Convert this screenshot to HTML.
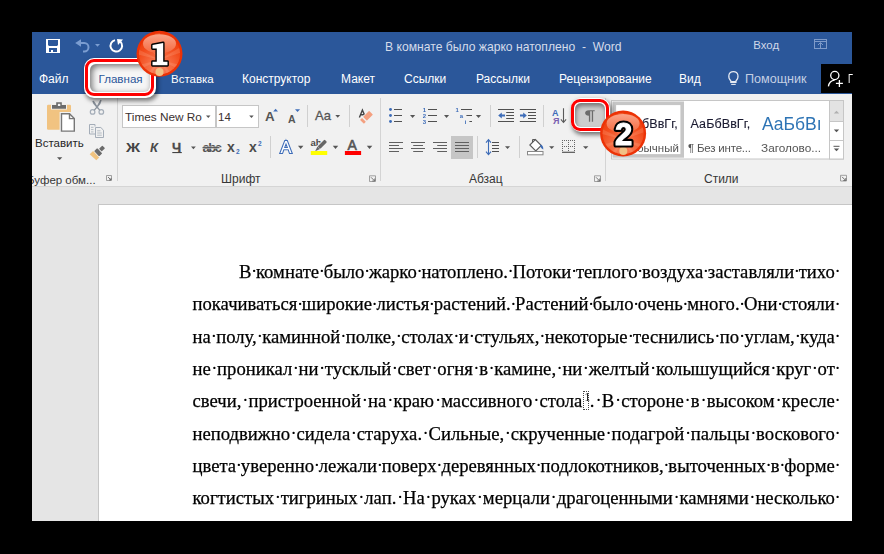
<!DOCTYPE html>
<html><head><meta charset="utf-8">
<style>
*{box-sizing:border-box}
html,body{margin:0;padding:0;width:884px;height:554px;overflow:hidden;background:#000;font-family:"Liberation Sans",sans-serif}
.a{position:absolute}
#win{position:absolute;left:32px;top:32px;width:820px;height:489px;background:#e5e5e5;overflow:hidden}
#title{position:absolute;left:0;top:0;width:820px;height:62px;background:#2b579a}
#ribbon{position:absolute;left:0;top:62px;width:820px;height:93px;background:#f1f1f1;border-bottom:1px solid #d5d5d5;overflow:hidden}
.t{position:absolute;white-space:nowrap;font-size:12px;line-height:14px}
.tab{color:#fff;top:40px}
.sep{position:absolute;width:1px;background:#d4d4d4}
.gl{position:absolute;font-size:12px;line-height:14px;color:#363636;top:78px;white-space:nowrap}
#page{position:absolute;left:66px;top:172px;width:800px;height:400px;background:#fff;border-left:1px solid #c6c6c6;border-top:1px solid #c6c6c6}
.ln{position:absolute;right:49.2px;display:flex;font-family:"Liberation Serif",serif;font-size:18.67px;line-height:24px;height:24px;white-space:nowrap;color:#000;-webkit-text-stroke:0.25px #000}
.ln span{flex:none;position:relative}
.ln i{flex:1 1 4.67px;position:relative;font-style:normal;text-align:center}
.ln i::after,.ln b::after{content:"·";position:absolute;left:50%;width:8px;margin-left:-3.6px;top:-0.8px;text-align:center;-webkit-text-stroke:0.1px #000}
.ln b{position:absolute;right:-4.67px;width:4.67px;height:24px;font-weight:normal}
.ln .fn{display:inline-block;position:relative;width:7.5px;height:10px;-webkit-text-stroke:0}
.fn::before{content:"";position:absolute;left:0.5px;top:-6px;width:6px;height:19px;border:1px dotted #444;box-sizing:border-box}
.fn::after{content:"1";position:absolute;left:1.8px;top:-7px;font-size:12.5px;line-height:14px;color:#222;-webkit-text-stroke:0}
</style></head><body>
<div id="win">
  <div id="title">
    <div class="t" style="left:353px;top:8px;color:#d5dcea;font-size:12.15px">В комнате было жарко натоплено&nbsp; -&nbsp; Word</div>
    <div class="t" style="left:721.3px;top:5.5px;color:#cfd8e8;font-size:11.4px">Вход</div>
    <div class="tab t" style="left:7px">Файл</div>
        <div class="tab t" style="left:139px;font-size:11.5px">Вставка</div>
    <div class="tab t" style="left:210px">Конструктор</div>
    <div class="tab t" style="left:309px">Макет</div>
    <div class="tab t" style="left:372px">Ссылки</div>
    <div class="tab t" style="left:444px">Рассылки</div>
    <div class="tab t" style="left:527px">Рецензирование</div>
    <div class="tab t" style="left:647px">Вид</div>
    <div class="tab t" style="left:713px;color:#c4cfe3;font-size:12.6px;top:40px">Помощник</div>
    <div class="a" style="left:789px;top:32px;width:31px;height:29px;background:#000"></div>
  </div>
  <div id="ribbon">

    <div class="t" style="left:3px;top:42px;font-size:11.5px;color:#262626">Вставить</div>
    <div class="a" style="left:90px;top:11px;width:94px;height:23px;background:#fff;border:1px solid #c6c6c6"></div>
    <div class="a" style="left:184px;top:11px;width:43px;height:23px;background:#fff;border:1px solid #c6c6c6"></div>
    <div class="t" style="left:93px;top:16px;font-size:11.8px;color:#3a3030">Times New Ro</div>
    <div class="t" style="left:186px;top:16px;font-size:11.5px;color:#3a3030">14</div>
    <div class="t" style="left:94px;top:47px;font-size:13px;font-weight:bold;color:#444;transform:scaleX(1.2);transform-origin:0 0">Ж</div>
    <div class="t" style="left:118px;top:47px;font-size:13px;font-weight:bold;font-style:italic;color:#4a4a4a">К</div>
    <div class="t" style="left:140px;top:47px;font-size:13px;font-weight:bold;color:#4a4a4a;-webkit-text-stroke:0.3px #4a4a4a">Ч</div>
    <div class="t" style="left:170.5px;top:46.5px;font-size:13px;font-weight:bold;color:#555;letter-spacing:-1.5px">abc</div>
    <div class="t" style="left:195px;top:46px;font-size:14px;font-weight:bold;color:#4a4a4a">x</div>
    <div class="t" style="left:204px;top:50.5px;font-size:6.5px;font-weight:bold;color:#3d6cb8">2</div>
    <div class="t" style="left:217px;top:46px;font-size:14px;font-weight:bold;color:#4a4a4a">x</div>
    <div class="t" style="left:226px;top:42.5px;font-size:6.5px;font-weight:bold;color:#3d6cb8">2</div>
    <div class="t" style="left:233px;top:15.5px;font-size:13.4px;font-weight:bold;color:#555">A</div>
    <div class="t" style="left:256px;top:17.5px;font-size:10.5px;font-weight:bold;color:#555">A</div>
    <div class="t" style="left:283px;top:14.5px;font-size:13px;color:#555;-webkit-text-stroke:0.3px #555">Aa</div>
        
    <div class="t" style="left:278.5px;top:41.5px;font-size:9.5px;font-weight:bold;color:#4a4a4a">ab</div>
    <div class="t" style="left:315.5px;top:43.5px;font-size:14px;color:#555;-webkit-text-stroke:0.6px #555">A</div>
    <div class="t" style="left:520px;top:12px;font-size:9px;font-weight:bold;color:#3d6cb8">A</div>
    <div class="t" style="left:521px;top:20px;font-size:9px;font-weight:bold;color:#7b5fb0">Я</div>
    <div class="gl" style="left:-5px;font-size:11.5px;top:78.5px">Буфер обм...</div>
    <div class="gl" style="left:189px">Шрифт</div>
    <div class="gl" style="left:437px">Абзац</div>
    <div class="gl" style="left:672px">Стили</div>
    <div class="sep" style="left:85px;top:4px;height:83px"></div>
    <div class="sep" style="left:348px;top:4px;height:83px"></div>
    <div class="sep" style="left:573px;top:4px;height:83px"></div>
  </div>
  <div id="page"></div>
</div>
<div id="doc" class="a" style="left:0;top:259.7px;width:884px;height:300px;will-change:transform">
<div class="ln" style="left:239px;top:0.00px"><span>В</span><i></i><span>комнате</span><i></i><span>было</span><i></i><span>жарко</span><i></i><span>натоплено.</span><i></i><span>Потоки</span><i></i><span>теплого</span><i></i><span>воздуха</span><i></i><span>заставляли</span><i></i><span>тихо</span><b></b></div>
<div class="ln" style="left:192.5px;top:32.30px"><span>покачиваться</span><i></i><span>широкие</span><i></i><span>листья</span><i></i><span>растений.</span><i></i><span>Растений</span><i></i><span>было</span><i></i><span>очень</span><i></i><span>много.</span><i></i><span>Они</span><i></i><span>стояли</span><b></b></div>
<div class="ln" style="left:192.5px;top:64.60px"><span>на</span><i></i><span>полу,</span><i></i><span>каминной</span><i></i><span>полке,</span><i></i><span>столах</span><i></i><span>и</span><i></i><span>стульях,</span><i></i><span>некоторые</span><i></i><span>теснились</span><i></i><span>по</span><i></i><span>углам,</span><i></i><span>куда</span><b></b></div>
<div class="ln" style="left:192.5px;top:96.90px"><span>не</span><i></i><span>проникал</span><i></i><span>ни</span><i></i><span>тусклый</span><i></i><span>свет</span><i></i><span>огня</span><i></i><span>в</span><i></i><span>камине,</span><i></i><span>ни</span><i></i><span>желтый</span><i></i><span>колышущийся</span><i></i><span>круг</span><i></i><span>от</span><b></b></div>
<div class="ln" style="left:192.5px;top:129.20px"><span>свечи,</span><i></i><span>пристроенной</span><i></i><span>на</span><i></i><span>краю</span><i></i><span>массивного</span><i></i><span>стола<span class="fn"></span>.</span><i></i><span>В</span><i></i><span>стороне</span><i></i><span>в</span><i></i><span>высоком</span><i></i><span>кресле</span><b></b></div>
<div class="ln" style="left:192.5px;top:161.50px"><span>неподвижно</span><i></i><span>сидела</span><i></i><span>старуха.</span><i></i><span>Сильные,</span><i></i><span>скрученные</span><i></i><span>подагрой</span><i></i><span>пальцы</span><i></i><span>воскового</span><b></b></div>
<div class="ln" style="left:192.5px;top:193.80px"><span>цвета</span><i></i><span>уверенно</span><i></i><span>лежали</span><i></i><span>поверх</span><i></i><span>деревянных</span><i></i><span>подлокотников,</span><i></i><span>выточенных</span><i></i><span>в</span><i></i><span>форме</span><b></b></div>
<div class="ln" style="left:192.5px;top:226.10px"><span>когтистых</span><i></i><span>тигриных</span><i></i><span>лап.</span><i></i><span>На</span><i></i><span>руках</span><i></i><span>мерцали</span><i></i><span>драгоценными</span><i></i><span>камнями</span><i></i><span>несколько</span><b></b></div>
</div>


<svg class="a" style="left:0;top:0" width="884" height="554" viewBox="0 0 884 554">

  <!-- clipboard -->
  <rect x="47" y="104.8" width="24" height="25" rx="1.2" fill="#f1c381"/>
  <path d="M51,104.2 H55.6 V101.5 H62.4 V104.2 H67 V109.6 H51Z" fill="#f1f1f1"/>
  <path d="M52,105 H56.2 V102.2 H61.8 V105 H66 V108.7 H52Z" fill="#6b6b6b"/>
  <rect x="57.9" y="103.8" width="2.4" height="2.2" fill="#f1f1f1"/>
  <rect x="59.6" y="112" width="16.4" height="21" fill="#f1f1f1"/>
  <path d="M61.5,113.8 H69.5 L74.3,118.6 V131.1 H61.5Z" fill="#fff" stroke="#777" stroke-width="1.4"/>
  <path d="M69.5,113.8 V118.6 H74.3" fill="none" stroke="#777" stroke-width="1.4"/>
  <path d="M57,157.2 H62.3 L59.65,159.9Z" fill="#555"/>
  <!-- scissors -->
  <circle cx="92.6" cy="111.9" r="2.3" fill="none" stroke="#a4adb8" stroke-width="1.2"/>
  <circle cx="101.3" cy="111.9" r="2.3" fill="none" stroke="#a4adb8" stroke-width="1.2"/>
  <path d="M92.3,101.6 Q92.8,100.4 94,101 L97.6,106.4 L100.3,110 L99.3,110.5 L96.2,107.2 Q93,104.5 92.3,101.6Z" fill="#8a929c"/>
  <path d="M101.6,100.2 Q101.2,99.4 100.2,100 L96.6,106.4 L93.7,110 L94.7,110.5 L97.8,107.2 Q101,104.5 101.6,100.2Z" fill="#8a929c"/>
  <!-- copy -->
  <path d="M95,126.5 V124.5 H89.5 V134 H95" fill="none" stroke="#a4adb8" stroke-width="1"/>
  <path d="M91,127.3 H93.5 M91,129.6 H93.5 M91,131.9 H93.5" stroke="#a4adb8" stroke-width="0.8"/>
  <path d="M95.5,127.5 H100.8 L103.5,130.2 V137.5 H95.5Z" fill="#f1f1f1" stroke="#a4adb8" stroke-width="1"/>
  <path d="M97.2,130.8 H100.5 M97.2,133 H101.8 M97.2,135.2 H101.8" stroke="#a4adb8" stroke-width="0.8"/>
  <!-- format painter -->
  <g transform="translate(94.4,155.9) rotate(-44)">
    <path d="M-2.3,-4.4 H2.4 V4.4 H-1.6 Z" fill="#f1c37f"/>
    <rect x="3.1" y="-3.6" width="4.3" height="7.2" rx="0.6" fill="#6b6b6b"/>
    <rect x="8.3" y="-1.9" width="4.6" height="3.8" rx="0.6" fill="#6b6b6b"/>
  </g>
  <!-- launcher clipboard -->
  <path d="M106.5,175.5 H111.5 V180.5 H106.5Z" fill="none" stroke="#8c8c8c" stroke-width="0.8"/>
  <path d="M108,177 L111,180 M111,178 V180 H109" fill="none" stroke="#666" stroke-width="0.9"/>
  <!-- font dropdown arrows -->
  <path d="M206,115.5 H210.5 L208.25,117.9Z" fill="#555"/>
  <path d="M249.2,115.5 H253.7 L251.45,117.9Z" fill="#555"/>
  <path d="M191,146.4 H195.8 L193.4,149.2Z" fill="#555"/>
  <path d="M298,145.8 H303.4 L300.7,148.9Z" fill="#555"/>
  <path d="M332.8,145.8 H338.2 L335.5,148.9Z" fill="#555"/>
  <path d="M366.8,145.8 H372.3 L369.55,148.9Z" fill="#555"/>
  <path d="M335.3,115 H340.1 L337.7,117.8Z" fill="#555"/>
  <!-- underline & strike -->
  <rect x="172.3" y="152" width="9.5" height="1.1" fill="#444"/>
  <rect x="202.5" y="146.4" width="17" height="2.6" fill="#f1f1f1" opacity=".6"/>
  <rect x="202.5" y="147.1" width="17" height="1.2" fill="#505050"/>
  <!-- grow/shrink triangles -->
  <path d="M273.2,111.6 L275.6,108.8 L278,111.6Z" fill="#3d6cb8"/>
  <path d="M295,109.2 H300.1 L297.55,111.9Z" fill="#3d6cb8"/>
  <!-- separators font -->
  <rect x="307" y="105" width="1" height="22" fill="#d0d0d0"/>
  <rect x="349" y="105" width="1" height="22" fill="#d0d0d0"/>
  <rect x="270" y="136" width="1" height="22" fill="#d0d0d0"/>
  <text x="286" y="152.6" text-anchor="middle" font-family="Liberation Sans" font-size="16.5" fill="#fff" stroke="#3d6cb8" stroke-width="2.2" paint-order="stroke">A</text>
  <!-- eraser redo -->
  <path d="M359.4,117.6 L362.4,110 L365.6,117.6 M360.7,114.8 H364.3" fill="none" stroke="#444" stroke-width="1.4"/>
  <g transform="translate(364.75,119.05) rotate(-45)">
    <rect x="-0.2" y="-3.4" width="9.6" height="6.8" fill="#f1f1f1"/>
    <rect x="0.3" y="-2.7" width="8.6" height="5.4" rx="0.6" fill="#f4a080"/>
    <rect x="-3.9" y="-2.7" width="2.8" height="5.4" rx="0.4" fill="#f4a080"/>
  </g>
  <!-- highlighter -->
  <g transform="translate(318.3,148.2) rotate(-45)">
    <rect x="0" y="-2.6" width="11" height="5.2" fill="#f1f1f1"/>
    <rect x="0.8" y="-1.8" width="9.8" height="3.6" rx="1" fill="#666"/>
    <path d="M0.6,-1.8 L-4.4,0 L0.6,1.8Z" fill="#666"/>
  </g>
  <rect x="310.8" y="151" width="16.4" height="4" fill="#ff0"/>
  <rect x="344.9" y="151" width="16.2" height="4" fill="#f00"/>
  <!-- launcher font -->
  <path d="M369.5,175.8 H375.5 V181.5 H369.5Z" fill="none" stroke="#8c8c8c" stroke-width="0.8"/>
  <path d="M371,177.3 L374.5,180.8 M374.8,178.5 V181 H372.3" fill="none" stroke="#666" stroke-width="0.9"/>

  <!-- bullets -->
  <g fill="#3d6cb8"><circle cx="390.5" cy="109.5" r="1.45"/><circle cx="390.5" cy="115.5" r="1.45"/><circle cx="390.5" cy="121.5" r="1.45"/></g>
  <g stroke="#505050" stroke-width="1.1"><path d="M394,109.5 H402 M394,115.5 H402 M394,121.5 H402"/></g>
  <path d="M410,115 H415.2 L412.6,118Z" fill="#555"/>
  <!-- numbering -->
  <g stroke="#505050" stroke-width="1.1"><path d="M428,109.5 H437 M428,115.5 H437 M428,121.5 H437"/></g>
  <g font-family="Liberation Sans" font-weight="bold" font-size="6" fill="#3d6cb8"><text x="422.8" y="112">1</text><text x="422.8" y="118">2</text><text x="422.8" y="124">3</text></g>
  <path d="M444,115 H449.1 L446.55,118Z" fill="#555"/>
  <!-- multilevel -->
  <g stroke="#505050" stroke-width="1.1"><path d="M461,109.5 H472 M466.4,115.5 H472 M469.4,121.5 H472"/></g>
  <g font-family="Liberation Sans" font-weight="bold" font-size="6" fill="#3d6cb8"><text x="455.5" y="112">1</text><text x="459.8" y="118">a</text><text x="464.8" y="124">i</text></g>
  <path d="M475.9,115 H481.1 L478.5,118Z" fill="#555"/>
  <rect x="490" y="105" width="1" height="22" fill="#d0d0d0"/>
  <!-- decrease indent -->
  <g stroke="#505050" stroke-width="1.1"><path d="M498,109.5 H514 M506.2,112.5 H514 M506.2,115.5 H514 M506.2,118.5 H514 M498,121.5 H514"/></g>
  <path d="M498.2,115.5 L501.8,112.6 V114.4 H505 V116.6 H501.8 V118.4Z" fill="#3d6cb8"/>
  <!-- increase indent -->
  <g stroke="#505050" stroke-width="1.1"><path d="M519.8,109.5 H536 M528,112.5 H536 M528,115.5 H536 M528,118.5 H536 M519.8,121.5 H536"/></g>
  <path d="M526.8,115.5 L523.2,112.6 V114.4 H520 V116.6 H523.2 V118.4Z" fill="#3d6cb8"/>
  <rect x="543" y="105" width="1" height="22" fill="#d0d0d0"/>
  <!-- sort -->
  <path d="M563.5,108.2 V122 M560.9,119.3 L563.5,122.5 L566.1,119.3" fill="none" stroke="#5a5a5a" stroke-width="1.1"/>
  <!-- align -->
  <g stroke="#606060" stroke-width="1.2">
    <path d="M389,142.5 H403 M389,145.5 H399 M389,148.5 H403 M389,151.5 H399"/>
    <path d="M411,142.5 H425 M413.2,145.5 H423 M411,148.5 H425 M413.2,151.5 H423"/>
    <path d="M433,142.5 H447 M437.2,145.5 H447 M433,148.5 H447 M437.2,151.5 H447"/>
  </g>
  <rect x="451" y="136" width="22" height="23" fill="#c6c6c6"/>
  <g stroke="#606060" stroke-width="1.2"><path d="M455,142.5 H469 M455,145.5 H469 M455,148.5 H469 M455,151.5 H469"/></g>
  <rect x="477" y="136" width="1" height="22" fill="#d0d0d0"/>
  <!-- line spacing -->
  <path d="M488.5,140 V154.3" stroke="#3d6cb8" stroke-width="1.1"/>
  <path d="M486,142.6 L488.5,139.6 L491,142.6 M486,151.7 L488.5,154.7 L491,151.7" fill="none" stroke="#3d6cb8" stroke-width="1.1"/>
  <g stroke="#505050" stroke-width="1.1"><path d="M492,142.5 H499 M492,145.5 H499 M492,148.5 H499 M492,151.5 H499"/></g>
  <path d="M505,146.3 H510.1 L507.55,148.9Z" fill="#555"/>
  <rect x="519" y="136" width="1" height="22" fill="#d0d0d0"/>
  <!-- shading -->
  <path d="M535.3,139.5 L541.3,145.5 L535.8,151 L529.8,145Z" fill="#fff" stroke="#5a5a5a" stroke-width="1.1"/>
  <path d="M532.5,142.5 V139.5 H535.3" fill="none" stroke="#5a5a5a" stroke-width="1"/>
  <path d="M540,144.5 Q543.5,145 543.3,149.6 Q540.5,148.5 540,144.5Z" fill="#3d6cb8"/>
  <rect x="527.5" y="151.5" width="15.5" height="3.3" fill="#fff" stroke="#888" stroke-width="1"/>
  <path d="M549.1,146.3 H554.3 L551.7,148.9Z" fill="#555"/>
  <!-- borders -->
  <g fill="#777">
    <path d="M562,140 h13 v1 h-13z" opacity=".0"/>
  </g>
  <g stroke="#666" stroke-width="1" stroke-dasharray="1 1">
    <path d="M562,140.5 H575 M562,146.5 H575 M562.5,140 V152 M568.5,140 V152 M574.5,140 V152"/>
  </g>
  <path d="M562,152.3 H575" stroke="#555" stroke-width="1.2"/>
  <path d="M583,146.3 H588.4 L585.7,148.9Z" fill="#555"/>
  <!-- launcher para -->
  <path d="M594.5,175.8 H600.5 V181.5 H594.5Z" fill="none" stroke="#8c8c8c" stroke-width="0.8"/>
  <path d="M596,177.3 L599.5,180.8 M599.8,178.5 V181 H597.3" fill="none" stroke="#666" stroke-width="0.9"/>
  <!-- styles gallery -->
  <rect x="611.5" y="100.5" width="232" height="58.5" fill="#fff" stroke="#c6c6c6" stroke-width="1"/>
  <rect x="614.3" y="103.3" width="67.9" height="52.6" fill="none" stroke="#c6c6c6" stroke-width="3.6"/>
  <rect x="829.5" y="100.5" width="14" height="58.5" fill="#fff" stroke="#c6c6c6" stroke-width="1"/>
  <rect x="830" y="101" width="13" height="20" fill="#e3e3e3"/>
  <path d="M829.5,121.5 H843.5 M829.5,140.5 H843.5" stroke="#c6c6c6"/>
  <path d="M833.8,113.5 H839.2 L836.5,110.8Z" fill="#b0b0b0"/>
  <path d="M833.8,129.5 H839.2 L836.5,132.2Z" fill="#555"/>
  <path d="M833.5,146.3 H839.5" stroke="#555" stroke-width="1"/>
  <path d="M833.8,148.5 H839.2 L836.5,151.2Z" fill="#555"/>
  <!-- launcher styles -->
  <path d="M840.5,175.3 H846.5 V181 H840.5Z" fill="none" stroke="#8c8c8c" stroke-width="0.8"/>
  <path d="M842,176.8 L845.5,180.3 M845.8,178 V180.5 H843.3" fill="none" stroke="#666" stroke-width="0.9"/>
  <!-- save -->
  <rect x="46" y="39" width="14" height="14" fill="#fff"/>
  <path d="M48,40 H58 V45 L57,46 H49 L48,45Z" fill="#2b579a"/>
  <path d="M49,48 H57 V52 H53 V50 H51 V52 H49Z" fill="#2b579a"/>
  <!-- undo -->
  <path d="M81,39.3 L75.2,43 L81,46.7Z" fill="#7b9dd1"/>
  <path d="M79,43 H84.3 A4.2,4.2 0 0 1 84.3,51.4 H83" fill="none" stroke="#7b9dd1" stroke-width="2"/>
  <path d="M95,44 H100 L97.5,46.8Z" fill="#7b9dd1"/>
  <!-- repeat -->
  <path d="M115,40.1 A5.8,5.8 0 1 0 120.4,41.6" fill="none" stroke="#fff" stroke-width="2"/>
  <path d="M117,39 L123,39.6 L118,45Z" fill="#fff"/>
  <!-- ribbon display options -->
  <rect x="814.5" y="39.5" width="12" height="9" fill="none" stroke="#7f9bc9" stroke-width="1"/>
  <line x1="814.5" y1="41.5" x2="826.5" y2="41.5" stroke="#7f9bc9"/>
  <path d="M818,45 L820.5,42.5 L823,45 M820.5,43 V48" fill="none" stroke="#7f9bc9"/>
  <!-- lightbulb -->
  <path d="M730.9,81 C727.6,78 728,71.6 733.4,71.6 C738.8,71.6 739.2,78 735.9,81 V82.3 H730.9Z" fill="none" stroke="#e6eaf2" stroke-width="1.2"/>
  <rect x="730.6" y="81" width="5.6" height="1.8" fill="#e6eaf2"/>
  <path d="M731.2,84.4 H735.7" stroke="#e6eaf2" stroke-width="1.1"/>
  <!-- user icon -->
  <circle cx="834.8" cy="75.5" r="4.1" fill="none" stroke="#fff" stroke-width="1.3"/>
  <path d="M828.4,86.4 C829,82.6 831.3,80.6 834.6,80.2" fill="none" stroke="#fff" stroke-width="1.3"/>
  <path d="M839.4,79.9 V86.9 M835.9,83.4 H842.9" stroke="#fff" stroke-width="1.3"/>
</svg>

<div class="a" style="left:32px;top:62px;width:820px;height:93px">
  <div class="a" style="left:582px;top:39px;width:215px;height:57px;overflow:hidden">
    <div class="t" style="left:4px;top:16px;font-size:12.5px;color:#1a1a30;letter-spacing:0.1px;-webkit-text-stroke:0.12px #1a1a30">АаБбВвГг,</div>
    <div class="t" style="left:76.5px;top:16px;font-size:12.5px;color:#1a1a30;letter-spacing:0.1px;-webkit-text-stroke:0.12px #1a1a30">АаБбВвГг,</div>
    <div class="t" style="left:14px;top:40px;font-size:11.5px;color:#555">Обычный</div>
    <div class="t" style="left:74px;top:40px;font-size:11.5px;color:#555;letter-spacing:-0.2px">¶ Без инте...</div>
    <div class="t" style="left:148px;top:13px;font-size:17.5px;line-height:20px;color:#2e74b5">АаБбВı</div>
    <div class="t" style="left:147px;top:40px;font-size:11.8px;color:#555">Заголово...</div>
  </div>
</div>
<div class="t" style="left:847.7px;top:72px;color:#fff;font-size:12px;transform:scaleX(0.75);transform-origin:0 0">Г</div>
<!-- annotation box 1 -->
<div class="a" style="left:84.3px;top:57.8px;width:71.7px;height:39.8px;border-radius:10px;background:#fff;box-shadow:1.5px 2.5px 4px rgba(0,0,0,.5)">
  <div class="a" style="left:1.2px;top:1.4px;width:68.8px;height:36.8px;border:3.3px solid #f00;border-radius:9px;background:#fff">
    <div class="a" style="left:1.4px;top:1.4px;right:1.4px;bottom:1.4px;border-radius:6px;background:#f6f6f6;box-shadow:inset 2px 2px 6px rgba(0,0,0,.55)"></div>
  </div>
</div>
<div class="t" style="left:98.5px;top:71.5px;color:#2b579a;font-size:11.6px">Главная</div>
<!-- annotation box 2 -->
<div class="a" style="left:570.5px;top:97.5px;width:39.5px;height:34px;border-radius:10px;background:#fff;box-shadow:1.5px 2.5px 4px rgba(0,0,0,.5)">
  <div class="a" style="left:0.8px;top:1px;width:38px;height:32px;border:3.8px solid #f00;border-radius:9px;background:#fff">
    <div class="a" style="left:1px;top:1px;right:1px;bottom:1px;border-radius:6px;background:#cdcdcd;box-shadow:inset 1px 3px 4px rgba(0,0,0,.42)"></div>
  </div>
</div>
<svg class="a" style="left:0;top:0" width="884" height="554" viewBox="0 0 884 554">
  <defs>
    <radialGradient id="bg1" cx="50%" cy="85%" r="75%">
      <stop offset="0" stop-color="#f9845f"/>
      <stop offset="0.4" stop-color="#f6693f"/>
      <stop offset="0.75" stop-color="#f24c1c"/>
      <stop offset="1" stop-color="#ee3e0c"/>
    </radialGradient>
    <linearGradient id="gl1" x1="0" y1="0" x2="0" y2="1">
      <stop offset="0" stop-color="#faa488"/>
      <stop offset="0.6" stop-color="#f7805c"/>
      <stop offset="1" stop-color="#f56a40"/>
    </linearGradient>
    <clipPath id="cc"><circle r="20.6"/></clipPath>
  </defs>
  <path d="M588.8,110.2 H594.7 V111.3 H593.1 V121.8 H591.8 V111.3 H590.2 V121.8 H588.9 V115.8 C586.5,115.8 585.1,114.6 585.1,113 C585.1,111.3 586.5,110.2 588.8,110.2Z" fill="#6c6c6c"/>
  <g id="badge1" transform="translate(159.5,53.8)">
    <circle r="23" fill="#ec3206"/>
    <circle r="20.6" fill="url(#bg1)"/>
    <path d="M0,6 L-29.1,-1.3 L-27.0,-7.2Z M0,6 L-19.7,-16.6 L-14.5,-20.2Z M0,6 L-5.7,-23.4 L0.5,-24.0Z M0,6 L14.5,-20.2 L19.7,-16.6Z M0,6 L25.7,-9.5 L28.4,-3.8Z M0,6 L29.1,13.3 L27.0,19.2Z M0,6 L19.7,28.6 L14.5,32.2Z M0,6 L5.7,35.4 L-0.5,36.0Z M0,6 L-14.5,32.2 L-19.7,28.6Z M0,6 L-27.0,19.2 L-29.1,13.3Z" fill="#ffb898" opacity=".22" clip-path="url(#cc)"/>
    <ellipse cx="0" cy="-10" rx="16.5" ry="9.5" fill="url(#gl1)"/>
    <ellipse cx="0" cy="18.2" rx="4" ry="4" fill="#f1c084"/>
  </g>
  <path d="M163.2,43 L152.5,45 V48.6 H156.8 V61.7 H152.5 V65.3 H167.5 V61.7 H163.2 Z" fill="#fff" stroke="#000" stroke-width="2.8" stroke-linejoin="round" paint-order="stroke"/>
  <g id="badge2" transform="translate(623.1,133.4)">
    <circle r="23" fill="#ec3206"/>
    <circle r="20.6" fill="url(#bg1)"/>
    <path d="M0,6 L-29.1,-1.3 L-27.0,-7.2Z M0,6 L-19.7,-16.6 L-14.5,-20.2Z M0,6 L-5.7,-23.4 L0.5,-24.0Z M0,6 L14.5,-20.2 L19.7,-16.6Z M0,6 L25.7,-9.5 L28.4,-3.8Z M0,6 L29.1,13.3 L27.0,19.2Z M0,6 L19.7,28.6 L14.5,32.2Z M0,6 L5.7,35.4 L-0.5,36.0Z M0,6 L-14.5,32.2 L-19.7,28.6Z M0,6 L-27.0,19.2 L-29.1,13.3Z" fill="#ffb898" opacity=".22" clip-path="url(#cc)"/>
    <ellipse cx="0" cy="-10" rx="16.5" ry="9.5" fill="url(#gl1)"/>
    <ellipse cx="0.2" cy="17.6" rx="4" ry="4" fill="#f1c084"/>
  </g>
  <text x="623.5" y="144.6" text-anchor="middle" font-family="Liberation Sans" font-weight="bold" font-size="31" fill="#000" stroke="#000" stroke-width="5.2" stroke-linejoin="round">2</text>
  <text x="623.5" y="144.6" text-anchor="middle" font-family="Liberation Sans" font-weight="bold" font-size="31" fill="#fff" stroke="#fff" stroke-width="1.1" stroke-linejoin="round">2</text>
</svg>
</body></html>
